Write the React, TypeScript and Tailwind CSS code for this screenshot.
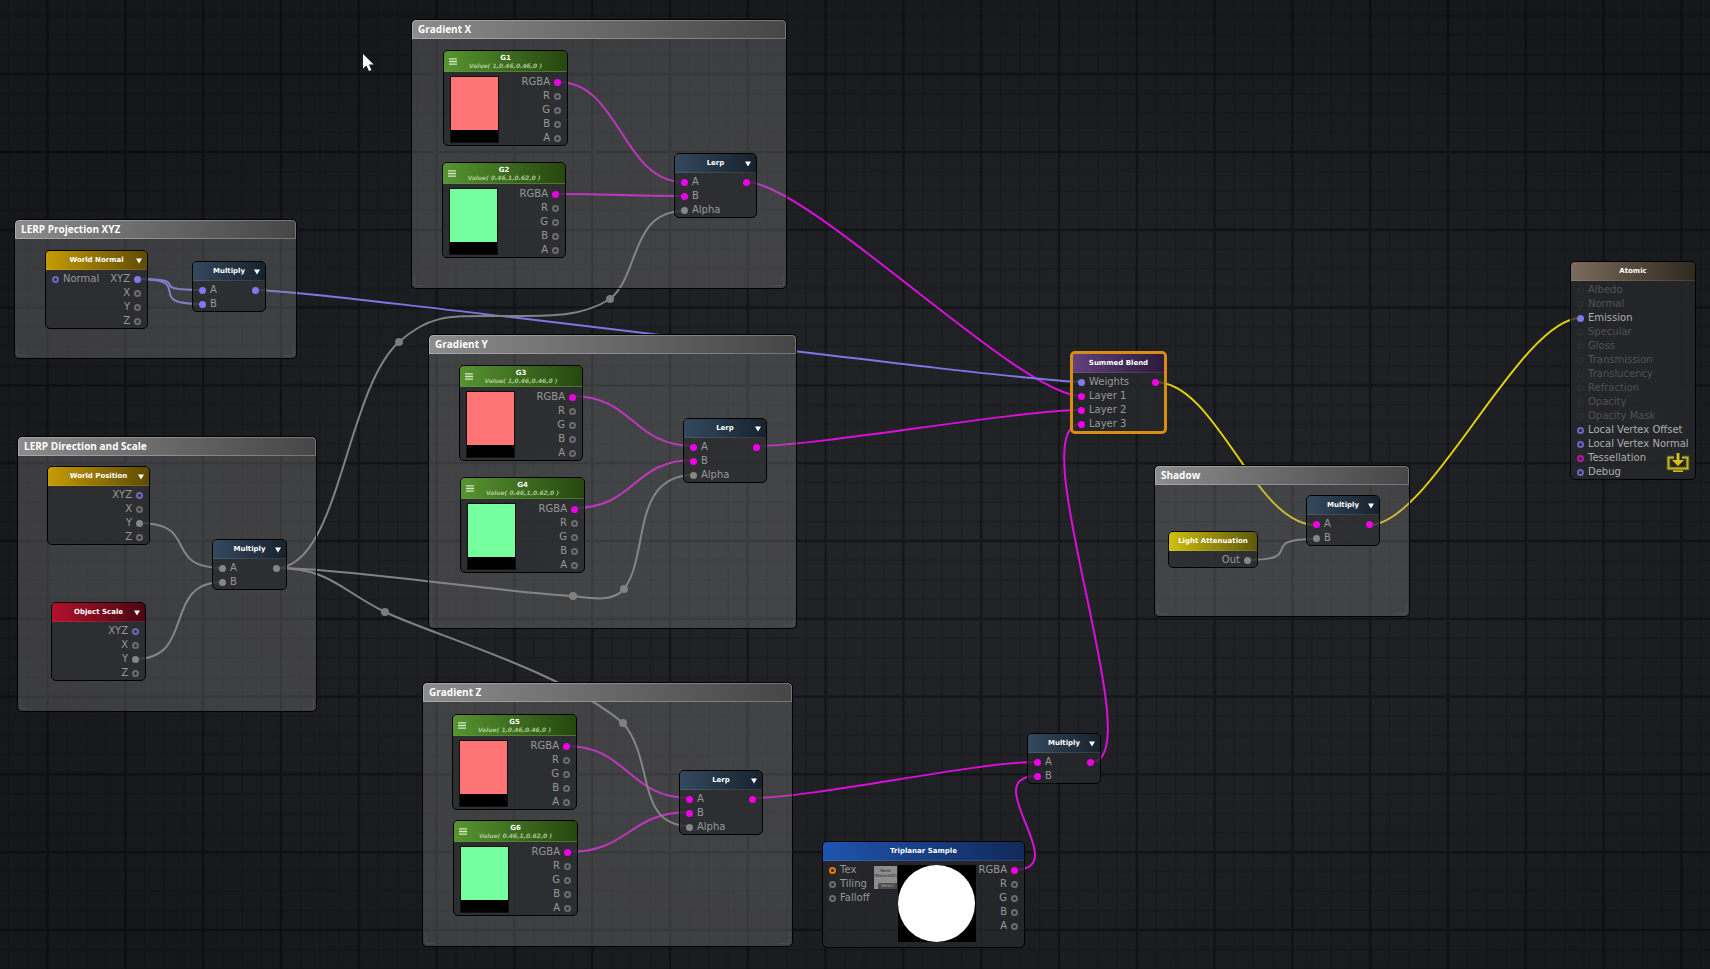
import type { ReactNode } from 'react';
import clsx from 'clsx';

type PinKind = 'gray' | 'vector' | 'color' | 'texture' | 'ghost';

interface Port {
  label: string;
  kind?: PinKind;
  linked?: boolean;
  tone?: string;
}

interface NodeProps {
  title: string;
  place: string;
  header: string;
  inputs?: Port[];
  outputs?: Port[];
  foldable?: boolean;
  selected?: boolean;
  children?: ReactNode;
}

const PIN_RING: Record<PinKind, string> = {
  gray: 'border-[#6b6c6e]',
  vector: 'border-[#6c66c4]',
  color: 'border-[#b516b0]',
  texture: 'border-[#e07a10]',
  ghost: 'border-[#2b2c2f]',
};

const PIN_FILL: Record<PinKind, string> = {
  gray: 'bg-[#868686]',
  vector: 'bg-[#7f79ee]',
  color: 'bg-[#f000e6]',
  texture: 'bg-[#e07a10]',
  ghost: 'bg-[#2b2c2f]',
};

const STEEL = 'from-[#34495e] to-[#17222e]';
const GOLD = 'from-[#c79c02] to-[#5e4b04]';
const GREEN = 'from-[#579530] to-[#26470f]';

const RGBA_PORTS: Port[] = [
  { label: 'RGBA', kind: 'color', linked: true },
  { label: 'R' },
  { label: 'G' },
  { label: 'B' },
  { label: 'A' },
];

const AXIS_PORTS: Port[] = [
  { label: 'XYZ', kind: 'vector' },
  { label: 'X' },
  { label: 'Y', linked: true },
  { label: 'Z' },
];

const FADED = 'text-[#505155]';
const BRIGHT = 'text-[#adaeb0]';

const ATOMIC_PORTS: Port[] = [
  { label: 'Albedo', kind: 'ghost', tone: FADED },
  { label: 'Normal', kind: 'ghost', tone: FADED },
  { label: 'Emission', kind: 'vector', linked: true, tone: BRIGHT },
  { label: 'Specular', kind: 'ghost', tone: FADED },
  { label: 'Gloss', kind: 'ghost', tone: FADED },
  { label: 'Transmission', kind: 'ghost', tone: FADED },
  { label: 'Translucency', kind: 'ghost', tone: FADED },
  { label: 'Refraction', kind: 'ghost', tone: FADED },
  { label: 'Opacity', kind: 'ghost', tone: FADED },
  { label: 'Opacity Mask', kind: 'ghost', tone: FADED },
  { label: 'Local Vertex Offset', kind: 'vector', tone: BRIGHT },
  { label: 'Local Vertex Normal', kind: 'vector', tone: BRIGHT },
  { label: 'Tessellation', kind: 'color', tone: BRIGHT },
  { label: 'Debug', kind: 'vector', tone: BRIGHT },
];

const MAGENTA = '#d80fd8';
const VIOLET = '#7d77e6';
const YELLOW = '#e2cf10';
const GRAY = '#828282';

const REACH = 62;

// Links leave and enter their pins horizontally.
function link(x1: number, y1: number, x2: number, y2: number) {
  return `M${x1} ${y1} C${x1 + REACH} ${y1} ${x2 - REACH} ${y2} ${x2} ${y2}`;
}

const WIRES = [
  { color: MAGENTA, d: link(558, 82, 684, 182) },
  { color: MAGENTA, d: link(556, 194, 684, 196) },
  { color: MAGENTA, d: link(746, 182, 1081, 396) },
  { color: MAGENTA, d: link(572, 396, 694, 446) },
  { color: MAGENTA, d: link(574, 508, 694, 460) },
  { color: MAGENTA, d: link(756, 446, 1081, 410) },
  { color: MAGENTA, d: link(566, 746, 690, 798) },
  { color: MAGENTA, d: link(568, 852, 690, 812) },
  { color: MAGENTA, d: link(752, 798, 1037, 762) },
  { color: MAGENTA, d: link(1014, 870, 1037, 776) },
  { color: MAGENTA, d: link(1091, 762, 1081, 424) },
  { color: VIOLET, d: link(137, 279, 202, 290) },
  { color: VIOLET, d: link(137, 279, 202, 304) },
  { color: VIOLET, d: link(255, 290, 1081, 382) },
  { color: YELLOW, d: link(1155, 382, 1316, 525) },
  { color: YELLOW, d: link(1369, 525, 1581, 318) },
  { color: GRAY, d: link(1247, 560, 1316, 539) },
  { color: GRAY, d: link(139, 523, 223, 568) },
  { color: GRAY, d: link(135, 659, 223, 582) },
  { color: GRAY, d: 'M276 568 C340 568 345 390 399 342 C430 314 450 316 499 316 S580 318 610 299 C640 275 630 211 684 211' },
  { color: GRAY, d: 'M276 568 C340 568 500 592 573 596 C590 598 612 603 624 589 C650 555 630 475 694 475' },
  { color: GRAY, d: 'M276 568 C330 568 340 590 385 612 C430 634 560 670 623 723 C655 760 635 826 690 826' },
];

const KNOTS = [
  [399, 342],
  [610, 299],
  [573, 596],
  [624, 589],
  [385, 612],
  [623, 723],
];

function Backdrop() {
  return (
    <svg className="absolute inset-0 h-full w-full" aria-hidden="true">
      <defs>
        <radialGradient id="glow" cx="56%" cy="55%" r="62%">
          <stop offset="0" stopColor="#232428" />
          <stop offset="0.5" stopColor="#1f2023" />
          <stop offset="1" stopColor="#16171b" />
        </radialGradient>
        <pattern id="grid" x="47.6" y="74.2" width="77.8" height="77.8" patternUnits="userSpaceOnUse">
          <path
            d="M19.45 0V77.8M38.9 0V77.8M58.35 0V77.8M0 19.45H77.8M0 38.9H77.8M0 58.35H77.8"
            stroke="#000"
            strokeOpacity="0.15"
            strokeWidth="1.5"
          />
          <path d="M0 0V77.8M77.8 0V77.8M0 0H77.8M0 77.8H77.8" stroke="#000" strokeOpacity="0.38" strokeWidth="2.4" />
        </pattern>
      </defs>
      <rect width="100%" height="100%" fill="url(#glow)" />
      <rect width="100%" height="100%" fill="url(#grid)" />
      {WIRES.map((wire) => (
        <path key={wire.d} d={wire.d} fill="none" stroke={wire.color} strokeWidth="2" />
      ))}
      {KNOTS.map(([x, y]) => (
        <circle key={`${x}-${y}`} cx={x} cy={y} r="4" fill="#7c7c7c" />
      ))}
    </svg>
  );
}

function Group({ title, place }: { title: string; place: string }) {
  return (
    <section className={clsx('absolute flex flex-col overflow-hidden rounded-[5px] border border-black bg-[#8b8c8d]/32', place)}>
      <h2 className="flex h-[19px] shrink-0 items-center rounded-t-[4px] border border-white/25 bg-linear-to-r from-[#8c8c8c] to-[#464646] bg-origin-border px-[5px] pb-px font-['Open_Sans','Noto_Sans',sans-serif] text-[10px] leading-none font-bold text-white">
        {title}
      </h2>
      <div className="flex grow items-end justify-between p-[2px]">
        <span className="size-[11px] border-b border-l border-white/6" />
        <span className="size-[11px] border-r border-b border-white/6" />
      </div>
    </section>
  );
}

function Pin({ kind = 'gray', linked }: Port) {
  return <span className={clsx('size-[7px] shrink-0 rounded-full', linked ? PIN_FILL[kind] : ['border-2', PIN_RING[kind]])} />;
}

function Inputs({ ports }: { ports: Port[] }) {
  return (
    <ul className="flex flex-col">
      {ports.map((port) => (
        <li key={port.label} className={clsx('flex h-[14px] items-center gap-1', port.tone)}>
          <Pin {...port} />
          {port.label}
        </li>
      ))}
    </ul>
  );
}

function Outputs({ ports }: { ports: Port[] }) {
  return (
    <ul className="ml-auto flex flex-col">
      {ports.map((port) => (
        <li key={port.label} className="flex h-[14px] items-center justify-end gap-1">
          {port.label}
          <Pin {...port} />
        </li>
      ))}
    </ul>
  );
}

function FoldButton({ title }: { title: string }) {
  return (
    <button type="button" aria-label={`Options for ${title}`} className="absolute top-0 right-[3px] flex h-full items-center px-px pt-px">
      <svg viewBox="0 0 8 6" className="h-[6px] w-[8px]" aria-hidden="true">
        <path d="M1 0.6H7L4 5.4Z" fill="#fff" />
      </svg>
    </button>
  );
}

function GraphNode({ title, place, header, inputs = [], outputs = [], foldable, selected, children }: NodeProps) {
  return (
    <article
      className={clsx(
        'absolute overflow-hidden rounded-[5px] bg-[#28292c]/76',
        selected ? 'border-[3px] border-[#d98c12]' : 'border border-black',
        place,
      )}
    >
      <h3
        className={clsx(
          'relative flex h-[19px] items-center justify-center border-b border-white/10 bg-linear-to-r pt-px text-[7px] leading-none font-bold text-white',
          header,
        )}
      >
        {title}
        {foldable && <FoldButton title={title} />}
      </h3>
      <div className={clsx('flex pt-[2px]', selected ? 'px-[5px]' : 'px-[6px]')}>
        {inputs.length > 0 && <Inputs ports={inputs} />}
        {children}
        {outputs.length > 0 && <Outputs ports={outputs} />}
      </div>
    </article>
  );
}

function ColorNode({ title, value, place, swatch }: { title: string; value: string; place: string; swatch: string }) {
  return (
    <article className={clsx('absolute overflow-hidden rounded-[5px] border border-black bg-[#28292c]/76', place)}>
      <header className={clsx('relative flex h-[21px] flex-col items-center border-b border-[#5f9a3a]/60 bg-linear-to-r pt-[3px]', GREEN)}>
        <button type="button" aria-label={`Menu for ${title}`} className="absolute top-0 left-[5px] flex h-full items-center">
          <svg viewBox="0 0 8 7" className="h-[7px] w-[8px]" aria-hidden="true">
            <path d="M0 0.8H8M0 3.5H8M0 6.2H8" stroke="#d3e6c6" strokeWidth="1.3" />
          </svg>
        </button>
        <h3 className="text-[7px] leading-[8px] font-bold text-white">{title}</h3>
        <p className="text-[6px] leading-[8px] font-bold text-[#a9c894] italic">{value}</p>
      </header>
      <div className="flex px-[6px] pt-[3px]">
        <div className="mt-px flex h-[67px] w-[49px] flex-col border border-[#111] bg-black">
          <span className={clsx('h-[53px]', swatch)} />
        </div>
        <Outputs ports={RGBA_PORTS} />
      </div>
    </article>
  );
}

function CompileIcon() {
  return (
    <svg viewBox="0 0 24 22" className="h-[22px] w-[24px]" aria-hidden="true">
      <g fill="none" stroke="#b9ab10" strokeOpacity="0.25" strokeWidth="4">
        <path d="M8 5.5H2.5V16.5H21.5V5.5H16M12 1V9" />
      </g>
      <path d="M8 5.5H2.5V16.5H21.5V5.5H16" fill="none" stroke="#c2b51b" strokeWidth="2" />
      <path d="M10.7 1H13.3V8H18L12 14L6 8H10.7Z" fill="#cfc21e" />
      <path d="M7 18.2H17V20H7Z" fill="#c2b51b" />
    </svg>
  );
}

const MUL_INPUTS: Record<'vector' | 'gray' | 'color', Port[]> = {
  vector: [
    { label: 'A', kind: 'vector', linked: true },
    { label: 'B', kind: 'vector', linked: true },
  ],
  gray: [
    { label: 'A', linked: true },
    { label: 'B', linked: true },
  ],
  color: [
    { label: 'A', kind: 'color', linked: true },
    { label: 'B', kind: 'color', linked: true },
  ],
};

const LERP_INPUTS: Port[] = [...MUL_INPUTS.color, { label: 'Alpha', linked: true }];
const COLOR_OUT: Port[] = [{ label: '', kind: 'color', linked: true }];

const RED = { value: 'Value( 1,0.46,0.46,0 )', swatch: 'bg-[#ff7575]' };
const MINT = { value: 'Value( 0.46,1,0.62,0 )', swatch: 'bg-[#75ff9e]' };

export default function App() {
  return (
    <main className="relative h-screen w-full overflow-hidden bg-[#1b1c1f] font-['DejaVu_Sans',sans-serif] text-[10px] leading-none whitespace-nowrap text-[#98999b]">
      <Backdrop />

      <Group title="LERP Projection XYZ" place="left-[14px] top-[219px] w-[283px] h-[140px]" />
      <Group title="LERP Direction and Scale" place="left-[17px] top-[436px] w-[300px] h-[276px]" />
      <Group title="Gradient X" place="left-[411px] top-[19px] w-[376px] h-[270px]" />
      <Group title="Gradient Y" place="left-[428px] top-[334px] w-[369px] h-[295px]" />
      <Group title="Gradient Z" place="left-[422px] top-[682px] w-[371px] h-[265px]" />
      <Group title="Shadow" place="left-[1154px] top-[465px] w-[256px] h-[152px]" />

      <GraphNode
        title="World Normal"
        place="left-[45px] top-[250px] w-[103px]"
        header={GOLD}
        foldable
        inputs={[{ label: 'Normal', kind: 'vector' }]}
        outputs={[{ label: 'XYZ', kind: 'vector', linked: true }, { label: 'X' }, { label: 'Y' }, { label: 'Z' }]}
      />
      <GraphNode
        title="Multiply"
        place="left-[192px] top-[261px] w-[74px]"
        header={STEEL}
        foldable
        inputs={MUL_INPUTS.vector}
        outputs={[{ label: '', kind: 'vector', linked: true }]}
      />

      <GraphNode title="World Position" place="left-[47px] top-[466px] w-[103px]" header={GOLD} foldable outputs={AXIS_PORTS} />
      <GraphNode
        title="Object Scale"
        place="left-[51px] top-[602px] w-[95px]"
        header="from-[#b3112a] to-[#4b0713]"
        foldable
        outputs={AXIS_PORTS}
      />
      <GraphNode
        title="Multiply"
        place="left-[212px] top-[539px] w-[75px]"
        header={STEEL}
        foldable
        inputs={MUL_INPUTS.gray}
        outputs={[{ label: '', linked: true }]}
      />

      <ColorNode title="G1" place="left-[443px] top-[50px] w-[125px]" {...RED} />
      <ColorNode title="G2" place="left-[442px] top-[162px] w-[124px]" {...MINT} />
      <GraphNode title="Lerp" place="left-[674px] top-[153px] w-[83px]" header={STEEL} foldable inputs={LERP_INPUTS} outputs={COLOR_OUT} />

      <ColorNode title="G3" place="left-[459px] top-[365px] w-[124px]" {...RED} />
      <ColorNode title="G4" place="left-[460px] top-[477px] w-[125px]" {...MINT} />
      <GraphNode title="Lerp" place="left-[683px] top-[418px] w-[84px]" header={STEEL} foldable inputs={LERP_INPUTS} outputs={COLOR_OUT} />

      <ColorNode title="G5" place="left-[452px] top-[714px] w-[125px]" {...RED} />
      <ColorNode title="G6" place="left-[453px] top-[820px] w-[125px]" {...MINT} />
      <GraphNode title="Lerp" place="left-[679px] top-[770px] w-[84px]" header={STEEL} foldable inputs={LERP_INPUTS} outputs={COLOR_OUT} />

      <GraphNode
        title="Summed Blend"
        place="left-[1070px] top-[351px] w-[97px]"
        header="from-[#62407d] to-[#2c1a3c]"
        selected
        inputs={[
          { label: 'Weights', kind: 'vector', linked: true },
          { label: 'Layer 1', kind: 'color', linked: true },
          { label: 'Layer 2', kind: 'color', linked: true },
          { label: 'Layer 3', kind: 'color', linked: true },
        ]}
        outputs={COLOR_OUT}
      />

      <GraphNode
        title="Light Attenuation"
        place="left-[1168px] top-[531px] w-[90px]"
        header="from-[#d0c00a] to-[#5f580a]"
        outputs={[{ label: 'Out', linked: true }]}
      />
      <GraphNode
        title="Multiply"
        place="left-[1306px] top-[495px] w-[74px]"
        header={STEEL}
        foldable
        inputs={[
          { label: 'A', kind: 'color', linked: true },
          { label: 'B', linked: true },
        ]}
        outputs={COLOR_OUT}
      />

      <GraphNode
        title="Multiply"
        place="left-[1027px] top-[733px] w-[74px]"
        header={STEEL}
        foldable
        inputs={MUL_INPUTS.color}
        outputs={COLOR_OUT}
      />
      <GraphNode
        title="Triplanar Sample"
        place="left-[822px] top-[841px] w-[203px] h-[107px]"
        header="from-[#1f55b0] to-[#12295a]"
        inputs={[{ label: 'Tex', kind: 'texture' }, { label: 'Tiling' }, { label: 'Falloff' }]}
        outputs={RGBA_PORTS}
      >
        <div className="absolute top-[23px] left-[50px] flex">
          <div className="flex size-[25px] flex-col items-center border border-[#222] bg-[#8d8d8d] pt-[2px] text-center text-[4px] leading-[5px] text-[#222]">
            <span>None</span>
            <span>(Texture2D)</span>
            <button type="button" className="mt-auto h-[6px] w-[19px] self-end rounded-tl-[2px] bg-[#4b4b4b] leading-none text-[#aaa]">
              Select
            </button>
          </div>
          <div className="h-[77px] w-[78px] bg-black">
            <div className="size-[77px] rounded-full bg-white" />
          </div>
        </div>
      </GraphNode>

      <GraphNode
        title="Atomic"
        place="left-[1570px] top-[261px] w-[126px]"
        header="from-[#7d6c5c] to-[#30291f]"
        inputs={ATOMIC_PORTS}
      >
        <button type="button" aria-label="Compile shader" className="absolute right-[5px] bottom-[5px]">
          <CompileIcon />
        </button>
      </GraphNode>

      <svg viewBox="0 0 12 18" className="absolute top-[54px] left-[363px] h-[18px] w-[12px]" aria-hidden="true">
        <path d="M0 0V14.5L3.4 11.4L6 17L8.4 15.9L5.9 10.6H10.6Z" fill="#fff" />
      </svg>
    </main>
  );
}
